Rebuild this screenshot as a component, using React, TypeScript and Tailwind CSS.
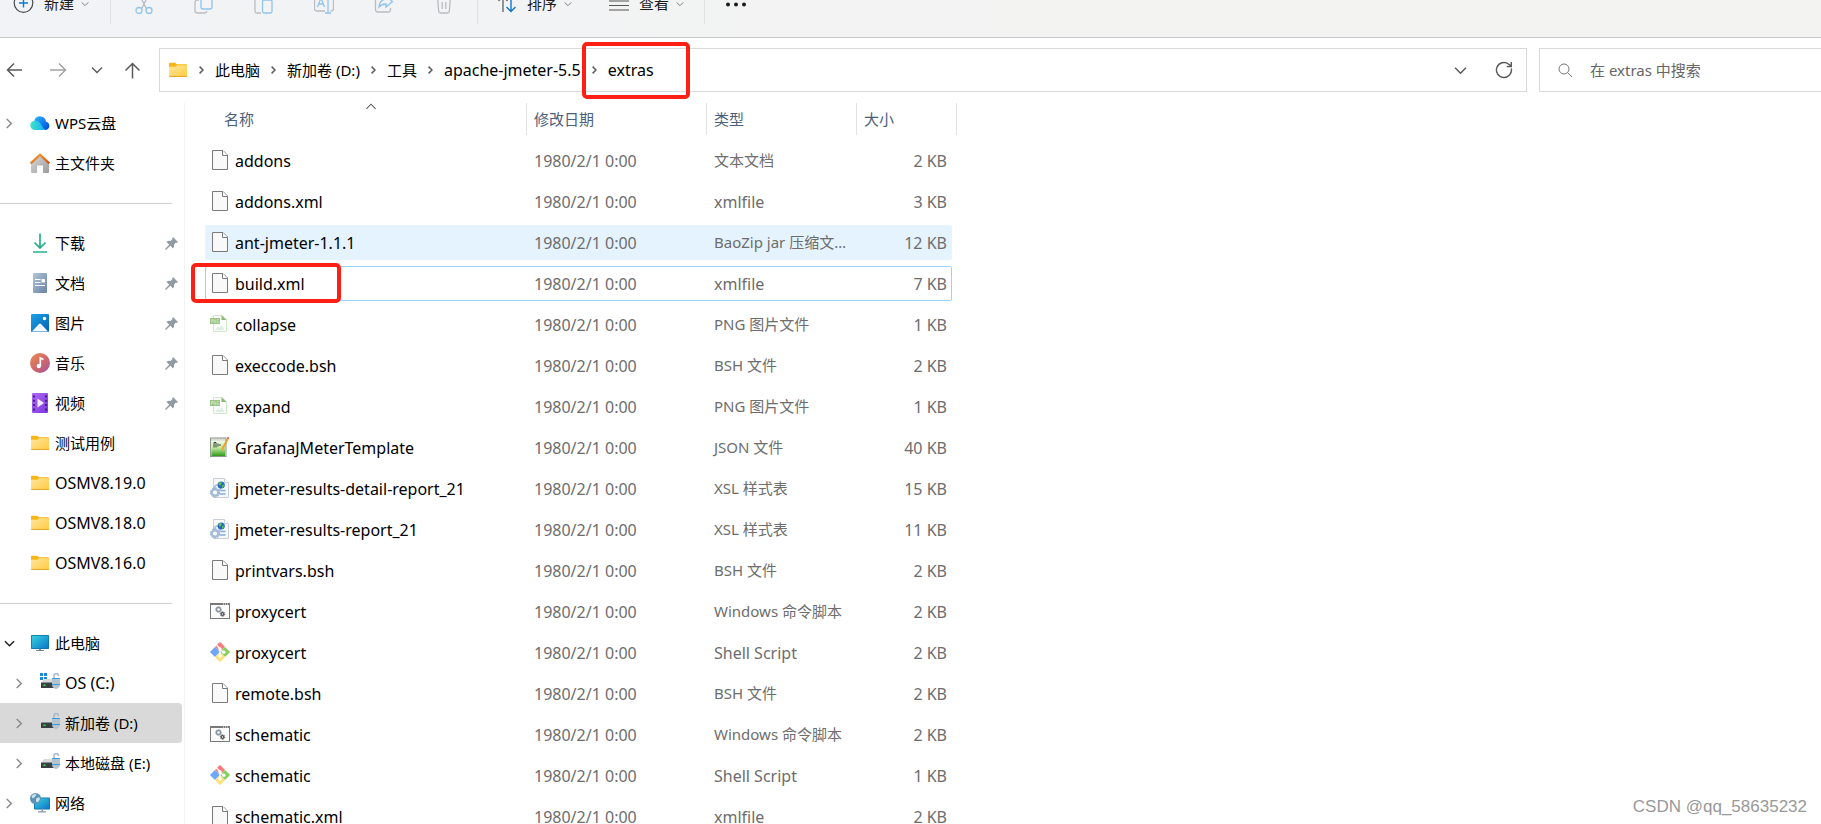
import React from 'react';
import clsx from 'clsx';

type FileKind = 'blank' | 'png' | 'json' | 'xsl' | 'cmd' | 'git';

interface FileRow {
  name: string;
  kind: FileKind;
  type: string;
  size: string;
  state?: 'hover' | 'focused';
}

const MODIFIED = '1980/2/1 0:00';

const FILES: FileRow[] = [
  { name: 'addons', kind: 'blank', type: '文本文档', size: '2 KB' },
  { name: 'addons.xml', kind: 'blank', type: 'xmlfile', size: '3 KB' },
  { name: 'ant-jmeter-1.1.1', kind: 'blank', type: 'BaoZip jar 压缩文件', size: '12 KB', state: 'hover' },
  { name: 'build.xml', kind: 'blank', type: 'xmlfile', size: '7 KB', state: 'focused' },
  { name: 'collapse', kind: 'png', type: 'PNG 图片文件', size: '1 KB' },
  { name: 'execcode.bsh', kind: 'blank', type: 'BSH 文件', size: '2 KB' },
  { name: 'expand', kind: 'png', type: 'PNG 图片文件', size: '1 KB' },
  { name: 'GrafanaJMeterTemplate', kind: 'json', type: 'JSON 文件', size: '40 KB' },
  { name: 'jmeter-results-detail-report_21', kind: 'xsl', type: 'XSL 样式表', size: '15 KB' },
  { name: 'jmeter-results-report_21', kind: 'xsl', type: 'XSL 样式表', size: '11 KB' },
  { name: 'printvars.bsh', kind: 'blank', type: 'BSH 文件', size: '2 KB' },
  { name: 'proxycert', kind: 'cmd', type: 'Windows 命令脚本', size: '2 KB' },
  { name: 'proxycert', kind: 'git', type: 'Shell Script', size: '2 KB' },
  { name: 'remote.bsh', kind: 'blank', type: 'BSH 文件', size: '2 KB' },
  { name: 'schematic', kind: 'cmd', type: 'Windows 命令脚本', size: '2 KB' },
  { name: 'schematic', kind: 'git', type: 'Shell Script', size: '1 KB' },
  { name: 'schematic.xml', kind: 'blank', type: 'xmlfile', size: '2 KB' },
];

// Latin-only labels run one size larger than the Chinese ones
const textSize = (s: string) => (/[\u4e00-\u9fff]/.test(s) ? 'text-[15px]' : 'text-base');

const Chevron: React.FC<{ dir: 'right' | 'down' | 'up'; className?: string; size?: number; width?: number }> = ({ dir, className, size = 12, width = 1.4 }) => {
  const d = { right: 'M3 1l5 5-5 5', down: 'M1 3.5l5 5 5-5', up: 'M1 8.5l5-5 5 5' }[dir];
  return (
    <svg width={size} height={size} viewBox="0 0 12 12" fill="none" stroke="currentColor" strokeWidth={width} className={clsx('shrink-0', className)}>
      <path d={d} />
    </svg>
  );
};

const CrumbArrow = () => (
  <svg width="5" height="8" viewBox="0 0 5 8" fill="none" stroke="#5c5c5c" strokeWidth="1.5" className="shrink-0">
    <path d="M.6.6L4 4 .6 7.4" />
  </svg>
);

const FolderIcon = () => (
  <svg width="20" height="20" viewBox="0 0 20 20" className="shrink-0">
    <defs>
      <linearGradient id="folder" x1="0" y1="0" x2="1" y2="1">
        <stop offset="0" stopColor="#ffe7a0" />
        <stop offset="1" stopColor="#ffca3e" />
      </linearGradient>
    </defs>
    <path d="M1 3.5q0-.8.8-.8h5.4l1.600 1.600H18q1 0 1 1V8H1z" fill="#f8b616" />
    <path d="M1 6.800h6.600l1.400-1.600h9.200q.8 0 .8.8v10.200q0 .8-.8.8H1.800q-.8 0-.8-.8z" fill="url(#folder)" />
    <path d="M1 16h18v.2q0 .8-.8.8H1.800q-.8 0-.8-.8z" fill="#e9a62a" />
  </svg>
);

const CloudIcon = () => (
  <svg width="20" height="20" viewBox="0 0 20 20" className="shrink-0">
    <defs>
      <linearGradient id="cloudA" x1="0" y1="0" x2="1" y2="1">
        <stop offset="0" stopColor="#2bb5ff" />
        <stop offset="1" stopColor="#0047d8" />
      </linearGradient>
      <linearGradient id="cloudB" x1="0" y1="0" x2="1" y2="0">
        <stop offset="0" stopColor="#3fe6c8" />
        <stop offset="1" stopColor="#12a8f5" />
      </linearGradient>
    </defs>
    <path d="M5 17h10.500a4.200 4.200 0 0 0 .5-8.300A6 6 0 0 0 4.500 7z" fill="url(#cloudA)" />
    <path d="M5 17a4.600 4.600 0 0 1-.3-9.200C8 7.200 10 9.500 11.500 12S14 16.500 16 17z" fill="url(#cloudB)" />
  </svg>
);

const HomeIcon = () => (
  <svg width="20" height="20" viewBox="0 0 20 20" className="shrink-0">
    <defs>
      <linearGradient id="homeWall" x1="0" y1="0" x2="1" y2="1">
        <stop offset="0" stopColor="#dcdcdc" />
        <stop offset="1" stopColor="#9b9b9b" />
      </linearGradient>
      <linearGradient id="homeRoof" x1="0" y1="0" x2="1" y2="1">
        <stop offset="0" stopColor="#fba32c" />
        <stop offset="1" stopColor="#d2500e" />
      </linearGradient>
    </defs>
    <path d="M1 9.500L10 1l9 8.500V19q0 1-1 1h-5v-7.500H7V20H2q-1 0-1-1z" fill="url(#homeWall)" />
    <path d="M.7 10.400L10 1.700l9.300 8.700" fill="none" stroke="url(#homeRoof)" strokeWidth="2.200" />
  </svg>
);

const DownloadIcon = () => (
  <svg width="20" height="20" viewBox="0 0 20 20" fill="none" stroke="#25b08c" strokeWidth="1.700" className="shrink-0">
    <path d="M10 .5v14M4.500 9.500L10 15l5.500-5.500M3 19h14" />
  </svg>
);

const DocumentIcon = () => (
  <svg width="20" height="20" viewBox="0 0 20 20" className="shrink-0">
    <defs>
      <linearGradient id="doc" x1="0" y1="0" x2="1" y2="1">
        <stop offset="0" stopColor="#b4c6da" />
        <stop offset="1" stopColor="#6782a3" />
      </linearGradient>
    </defs>
    <rect x="3" width="14" height="20" rx="1" fill="url(#doc)" />
    <path d="M5 6.500h5.500M5 9.500h5.500M5 12.500h10" stroke="#fff" strokeWidth="1.200" />
    <rect x="11.500" y="6" width="3.500" height="3.500" fill="#fff" />
  </svg>
);

const PictureIcon = () => (
  <svg width="20" height="20" viewBox="0 0 20 20" className="shrink-0">
    <defs>
      <linearGradient id="pic" x1="0" y1="0" x2="1" y2="1">
        <stop offset="0" stopColor="#1da3ea" />
        <stop offset="1" stopColor="#0561ae" />
      </linearGradient>
    </defs>
    <rect x="1" y="1" width="18" height="18" rx="1" fill="url(#pic)" />
    <path d="M2 18.500l7-7.500q1-1 2 0l7 7.500z" fill="#f3faff" />
    <circle cx="14.500" cy="5.500" r="1.700" fill="#fff" />
  </svg>
);

const MusicIcon = () => (
  <svg width="20" height="20" viewBox="0 0 20 20" className="shrink-0">
    <defs>
      <linearGradient id="music" x1="0" y1="0" x2="1" y2="1">
        <stop offset="0" stopColor="#ee8a4e" />
        <stop offset=".6" stopColor="#cb6470" />
        <stop offset="1" stopColor="#9c55ae" />
      </linearGradient>
    </defs>
    <circle cx="10" cy="10" r="10" fill="url(#music)" />
    <circle cx="8.800" cy="13" r="2.200" fill="#fff" />
    <path d="M10.300 13V5l3.200 1.500" fill="none" stroke="#fff" strokeWidth="1.600" />
  </svg>
);

const VideoIcon = () => (
  <svg width="20" height="20" viewBox="0 0 20 20" className="shrink-0">
    <defs>
      <linearGradient id="video" x1="0" y1="0" x2="1" y2="1">
        <stop offset="0" stopColor="#b06af0" />
        <stop offset="1" stopColor="#7a38df" />
      </linearGradient>
    </defs>
    <rect x="2" width="16" height="20" rx="1" fill="url(#video)" />
    <path d="M4 2.500v15.500M16 2.500v15.500" stroke="#3d1a80" strokeWidth="1.800" strokeDasharray="2 2.300" />
    <path d="M7.500 5.500l6.500 4.500-6.500 4.500z" fill="#f4eaff" />
  </svg>
);

const MonitorIcon = () => (
  <svg width="20" height="20" viewBox="0 0 20 20" className="shrink-0">
    <defs>
      <linearGradient id="screen" x1="0" y1="0" x2="1" y2="1">
        <stop offset="0" stopColor="#36d3e0" />
        <stop offset="1" stopColor="#0d76c8" />
      </linearGradient>
    </defs>
    <path d="M9 15h2v2h3v1H6v-1h3z" fill="#7b8893" />
    <rect x="1" y="2" width="18" height="14" rx=".8" fill="#1173a8" />
    <rect x="1.800" y="2.800" width="16.400" height="12.400" fill="url(#screen)" />
  </svg>
);

const DriveIcon: React.FC<{ system?: boolean }> = ({ system }) => (
  <svg width="20" height="20" viewBox="0 0 20 20" className="shrink-0">
    {system && <path d="M0 0h3v3H0zM4 0h3v3H4zM0 4h3v3H0zM4 4h3v3H4z" fill="#1989d8" />}
    <path d="M4 6h11l4 4H1z" fill="#d8dadc" />
    <rect x="1" y="9.500" width="16" height="5.500" rx=".6" fill="#3d4043" />
    <rect x="3.500" y="11.500" width="2" height="1.500" fill="#35e15a" />
    <path d="M14 5V3q0-2.500 2.500-2.500Q18.500.5 18.500 3" fill="none" stroke="#a9b8c4" strokeWidth="1.500" />
    <path d="M12 5h8v7q0 2.500-3 4h-2q-3-1.500-3-4z" fill="#b6c4d0" />
    <path d="M12 5.500h8M12 11.500h8" stroke="#3a9be4" strokeWidth="1.200" />
  </svg>
);

const NetworkIcon = () => (
  <svg width="20" height="20" viewBox="0 0 20 20" className="shrink-0">
    <rect x="4" y="4.500" width="16" height="12" rx=".8" fill="#1173a8" />
    <rect x="4.800" y="5.300" width="14.400" height="10.400" fill="url(#screen)" />
    <path d="M11.500 16.500h1.500v1.800h3v1.200H8v-1.200h3.500z" fill="#8b98a2" />
    <circle cx="5.500" cy="5.500" r="5.500" fill="#5c93b5" />
    <path d="M1.500 3q2-2.500 5-2L5 4 2.500 5.500zM6 5.500l3-1.500 1 2-2 3.500-2-1z" fill="#c6e2ee" />
  </svg>
);

const PinIcon = () => (
  <svg width="13" height="13" viewBox="0 0 13 13" className="shrink-0">
    <path d="M7.500.5q.5-.6 1 0l4.200 4.200q.5.500-.2.900-1 .3-1.800.2L9 7.500q.6 2.200-1 4L5.300 8.800 1 13 0 12l4.200-4.300L1.500 5Q3.300 3.400 5.500 4l1.800-1.700Q7.100 1.200 7.500.5z" fill="#8f9ba5" />
  </svg>
);

const Gear: React.FC<{ x: number; y: number; r: number; color: string }> = ({ x, y, r, color }) => (
  <g fill="none" stroke={color}>
    <circle cx={x} cy={y} r={r} strokeWidth="1.300" />
    <circle cx={x} cy={y} r={r + 0.9} strokeWidth="1" strokeDasharray="1.200 1" />
  </g>
);

const FileIcon: React.FC<{ kind: FileKind }> = ({ kind }) => (
  <svg width="20" height="20" viewBox="0 0 20 20" className="mb-0.5 shrink-0">
    {kind === 'blank' && (
      <>
        <path d="M2.500.5H13L17.500 5v14.500h-15z" fill="#f9f9f9" stroke="#7a7a7a" />
        <path d="M12.500.5V5.500h5" fill="#fff" stroke="#7a7a7a" />
      </>
    )}
    {kind === 'png' && (
      <>
        <path d="M3.500 1.500h8.500L16.500 6v11q0 .5-.5.500H4q-.5 0-.5-.5z" fill="#fbfdfa" stroke="#d2e5cd" />
        <path d="M11.500 1L16.500 6h-5z" fill="#8cba78" />
        <path d="M5 16l3-3.500 2 1.500 1.500-3 3 5z" fill="#dcefe2" />
        <rect y="4" width="10" height="6" fill="#9cc487" />
        <path d="M1.500 8.800V5.500h1.500v1.700H1.500M4 8.800V5.500l1.800 3.300V5.500M9 5.500H7.300v3H9V7" fill="none" stroke="#d3e7c8" strokeWidth=".7" />
      </>
    )}
    {kind === 'json' && (
      <>
        <defs>
          <linearGradient id="notepad" x1="0" y1="0" x2="0" y2="1">
            <stop offset="0" stopColor="#f2fbe9" />
            <stop offset=".45" stopColor="#c4ea9d" />
            <stop offset="1" stopColor="#2f9a1c" />
          </linearGradient>
        </defs>
        <rect x=".5" y="1" width="15.500" height="18.500" fill="#dfe5dc" stroke="#8d978a" />
        <rect x="1.500" y="4" width="13.500" height="15" fill="url(#notepad)" />
        <path d="M1 1.500h15" stroke="#b8c0b4" strokeWidth="2" strokeDasharray="1.500 1.500" />
        <path d="M4 10.500v-5h2v5M8 6.500v3M10 7v2" fill="none" stroke="#35413b" />
        <path d="M17 1l1.800 1-5.300 10-2.500 3 .7-4z" fill="#eda12c" />
        <path d="M17 1l.7-1 1.600.8-.5 1.200z" fill="#a6424c" />
      </>
    )}
    {kind === 'xsl' && (
      <>
        <path d="M3.500.5h11L18.500 4.500v15h-15z" fill="#f6f8fb" stroke="#c9cfd6" />
        <path d="M14.500.5v4h4" fill="#fff" stroke="#c9cfd6" />
        <path d="M10.500 12.500h5M9.500 16h6" stroke="#86a9e0" strokeWidth="1.600" />
        <circle cx="7.500" cy="10" r="3" fill="#eef4fb" stroke="#a8bfda" strokeWidth="1.600" />
        <circle cx="5" cy="14.500" r="3.200" fill="#fff" stroke="#a3bbd6" strokeWidth="2.200" />
        <circle cx="5" cy="14.500" r="4.600" fill="none" stroke="#8fa9c8" strokeWidth="1" strokeDasharray="1.800 1.200" />
        <circle cx="11.200" cy="7" r="3.600" fill="#2565c4" />
        <path d="M8.500 5q2-1.500 3.500-.5L11 7 9 7.500zM12 7l2-.500-.5 2.500-1.500 1z" fill="#5ac24d" />
      </>
    )}
    {kind === 'cmd' && (
      <>
        <rect x=".5" y="2.500" width="19" height="15" fill="#fcfcfc" stroke="#787878" />
        <path d="M0 3h20" stroke="#787878" strokeWidth="2" />
        <path d="M13 3h5" stroke="#fff" strokeWidth="1" strokeDasharray="1 1" />
        <Gear x={8.500} y={8.500} r={2} color="#8995a0" />
        <Gear x={12.500} y={13} r={1.400} color="#4d5257" />
      </>
    )}
    {kind === 'git' && (
      <>
        <path d="M9.200.6q.8-.8 1.600 0L15 5l-5 5-5-5z" fill="#f77d7d" />
        <path d="M15 5l4.400 4.200q.8.800 0 1.600L15 15l-5-5z" fill="#86cf5e" />
        <path d="M5 5l5 5-5 5-4.400-4.200q-.8-.8 0-1.600z" fill="#6fa8fa" />
        <path d="M10 10l5 5-4.200 4.400q-.8.800-1.600 0L5 15z" fill="#ffe17c" />
        <path d="M6.500 3L10 6.800V14M10 7.500l3.500 2.800" fill="none" stroke="#fff" strokeWidth="1.400" />
        <circle cx="10" cy="7" r="1.700" fill="#fff" />
        <circle cx="13.800" cy="10.200" r="1.700" fill="#fff" />
        <circle cx="10" cy="14" r="1.700" fill="#fff" />
      </>
    )}
  </svg>
);

interface TreeItem {
  label: string;
  icon: React.ReactNode;
  arrow?: 'right' | 'down';
  nested?: boolean;
  pinned?: boolean;
  active?: boolean;
}

const TREE: TreeItem[][] = [
  [
    { label: 'WPS云盘', icon: <CloudIcon />, arrow: 'right' },
    { label: '主文件夹', icon: <HomeIcon /> },
  ],
  [
    { label: '下载', icon: <DownloadIcon />, pinned: true },
    { label: '文档', icon: <DocumentIcon />, pinned: true },
    { label: '图片', icon: <PictureIcon />, pinned: true },
    { label: '音乐', icon: <MusicIcon />, pinned: true },
    { label: '视频', icon: <VideoIcon />, pinned: true },
    { label: '测试用例', icon: <FolderIcon /> },
    { label: 'OSMV8.19.0', icon: <FolderIcon /> },
    { label: 'OSMV8.18.0', icon: <FolderIcon /> },
    { label: 'OSMV8.16.0', icon: <FolderIcon /> },
  ],
  [
    { label: '此电脑', icon: <MonitorIcon />, arrow: 'down' },
    { label: 'OS (C:)', icon: <DriveIcon system />, arrow: 'right', nested: true },
    { label: '新加卷 (D:)', icon: <DriveIcon />, arrow: 'right', nested: true, active: true },
    { label: '本地磁盘 (E:)', icon: <DriveIcon />, arrow: 'right', nested: true },
    { label: '网络', icon: <NetworkIcon />, arrow: 'right' },
  ],
];

const TreeLink: React.FC<{ item: TreeItem }> = ({ item }) => (
  <a href="#" className={clsx('flex h-10 items-center pr-1', item.nested ? 'pl-[14px]' : 'pl-1', item.active && 'rounded-r-sm bg-[#d9d9d9]')}>
    <span className="flex w-[26px] shrink-0">
      {item.arrow && <Chevron dir={item.arrow} className={item.arrow === 'down' ? 'text-[#222]' : 'text-[#8a8a8a]'} width={1.6} size={11} />}
    </span>
    {item.icon}
    <span className={clsx('ml-[5px] flex-1 whitespace-nowrap', textSize(item.label))}>{item.label}</span>
    {item.pinned && <PinIcon />}
  </a>
);

const TOOLS: { label: string; icon: React.ReactNode }[] = [
  { label: '剪切', icon: <><path d="M5 0l7.500 15M15 0L7.500 15" stroke="#b9bcc0" /><circle cx="5" cy="16.500" r="3" /><circle cx="15" cy="16.500" r="3" /></> },
  { label: '复制', icon: <><path d="M5 6H3.500Q1 6 1 8.500v8Q1 19 3.500 19h7q2 0 2.500-2" stroke="#b9bcc0" /><rect x="7" y="1" width="11" height="14" rx="2" /></> },
  { label: '粘贴', icon: <><path d="M7 19H3q-2 0-2-2V4q0-2 2-2h2M15 2q2 0 2 2" stroke="#b9bcc0" /><rect x="8.500" y="6" width="9.500" height="13" rx="1.500" /></> },
  { label: '重命名', icon: <><path d="M11 17H3q-2.500 0-2.500-2.500v-9Q.5 3 3 3h8M16.500 3q3 0 3 2.500v9q0 2.500-3 2.500" stroke="#b9bcc0" /><path d="M3.500 13L7 4l3.500 9M5 10h4M14 1v18M11 19h6" /></> },
  { label: '共享', icon: <><path d="M8 2H4Q1.500 2 1.500 4.500v11Q1.500 18 4 18h10q2.500 0 2.500-2.500V14" stroke="#b9bcc0" /><path d="M12 2l6.500 5.500L12 13v-3q-4.500 0-7 3 .5-7 7-8z" /></> },
  { label: '删除', icon: <path d="M1.500 3h17M3.500 3l1.200 14q.2 2 2 2h6.600q1.800 0 2-2L16.500 3M8.200 8v7M11.800 8v7" stroke="#b9bcc0" /> },
];

const ToolSeparator = () => <span className="h-10 w-px shrink-0 bg-[#e0e1e4]" />;

const Toolbar = () => (
  <header className="flex h-[38px] flex-col justify-end overflow-hidden border-b border-[#c6c7ca] bg-linear-to-r from-[#f2f3f6] via-[#f3f3f3] via-50% to-[#f3f3f1]">
    <div className="flex h-[67px] shrink-0 items-center text-[15px] text-[#1b1b1b]">
      <button className="flex items-center pl-[13px]">
        <svg width="21" height="21" viewBox="0 0 21 21" fill="none" strokeWidth="1.200">
          <circle cx="10.500" cy="10" r="9.300" stroke="#4a4a4a" />
          <path d="M10.500 5.500v9M6 10h9" stroke="#0f78d0" strokeWidth="1.400" />
        </svg>
        <span className="ml-[10px]">新建</span>
        <Chevron dir="down" size={8} className="ml-[7px] text-[#777]" />
      </button>
      <span className="w-[21px]" />
      <ToolSeparator />
      <div className="mx-[3px] flex">
        {TOOLS.map(tool => (
          <button key={tool.label} aria-label={tool.label} className="flex w-[60px] justify-center">
            <svg width="20" height="20" viewBox="0 0 20 20" fill="none" stroke="#8fc4ec" strokeWidth="1.300">{tool.icon}</svg>
          </button>
        ))}
      </div>
      <ToolSeparator />
      <button className="flex items-center pl-[19px]">
        <svg width="20" height="20" viewBox="0 0 20 20" fill="none" strokeWidth="1.400">
          <path d="M6 18V3M1.500 7L6 2.500 10.500 7" stroke="#6b6b6b" />
          <path d="M14 2v15.500M9.500 13l4.500 4.500 4.500-4.500" stroke="#0f78d0" />
        </svg>
        <span className="ml-[10px]">排序</span>
        <Chevron dir="down" size={8} className="ml-[7px] text-[#777]" />
      </button>
      <button className="flex items-center pl-[37px]">
        <svg width="20" height="20" viewBox="0 0 20 20" fill="none" stroke="#555" strokeWidth="1.100">
          <path d="M0 7h20M0 11.500h20M0 16h20" />
        </svg>
        <span className="ml-[10px]">查看</span>
        <Chevron dir="down" size={8} className="ml-[7px] text-[#777]" />
      </button>
      <span className="w-[20px]" />
      <ToolSeparator />
      <button aria-label="更多" className="pl-5">
        <svg width="22" height="20" viewBox="0 0 22 20" fill="#1b1b1b">
          <circle cx="3" cy="10.500" r="2" />
          <circle cx="11" cy="10.500" r="2" />
          <circle cx="19" cy="10.500" r="2" />
        </svg>
      </button>
    </div>
  </header>
);

const CRUMBS = ['此电脑', '新加卷 (D:)', '工具', 'apache-jmeter-5.5'];

const NavBar = () => (
  <nav className="flex items-center pt-[10px] pb-[5px]">
    <div className="flex w-[159px] shrink-0 items-center pl-[6px] text-[#5a5a5a]">
      <button aria-label="后退">
        <svg width="17" height="16" viewBox="0 0 17 16" fill="none" stroke="currentColor" strokeWidth="1.500"><path d="M16 8H1.500M8 1.500L1.500 8 8 14.500" /></svg>
      </button>
      <button aria-label="前进" className="ml-[27px] text-[#a3a3a3]">
        <svg width="17" height="16" viewBox="0 0 17 16" fill="none" stroke="currentColor" strokeWidth="1.500"><path d="M0 8h15M9 1.500L15.500 8 9 14.500" /></svg>
      </button>
      <button aria-label="最近位置" className="ml-6"><Chevron dir="down" /></button>
      <button aria-label="上移" className="ml-[21px]">
        <svg width="17" height="17" viewBox="0 0 17 17" fill="none" stroke="currentColor" strokeWidth="1.500"><path d="M8.500 16.500v-15M1.500 8.500l7-7 7 7" /></svg>
      </button>
    </div>
    <div className="flex h-11 flex-1 items-center gap-[11px] border border-[#d9d9d9] pr-[13px] pl-2">
      <FolderIcon />
      {CRUMBS.map(crumb => (
        <React.Fragment key={crumb}>
          <CrumbArrow />
          <a href="#" className={clsx('whitespace-nowrap', textSize(crumb))}>{crumb}</a>
        </React.Fragment>
      ))}
      <div className="relative flex items-center gap-[11px]">
        <CrumbArrow />
        <a href="#" className="text-base">extras</a>
        <span className="pointer-events-none absolute -top-4 -left-2.5 h-[57px] w-[108px] rounded-[5px] border-4 border-[#ff2015]" />
      </div>
      <button aria-label="展开地址栏" className="ml-auto text-[#5a5a5a]"><Chevron dir="down" size={13} /></button>
      <button aria-label="刷新" className="ml-[17px]">
        <svg width="18" height="18" viewBox="0 0 18 18" fill="none" stroke="#5a5a5a" strokeWidth="1.400">
          <path d="M16.300 7.500A7.500 7.500 0 1 1 13.500 3L16 5M16.300 1v4.500h-4.500" />
        </svg>
      </button>
    </div>
    <div className="ml-3 flex h-11 w-[282px] shrink-0 items-center border border-r-0 border-[#d9d9d9] pl-[18px]">
      <label htmlFor="search" aria-label="搜索">
        <svg width="15" height="15" viewBox="0 0 15 15" fill="none" stroke="#777"><circle cx="6" cy="6" r="5" /><path d="M9.500 9.500l4.500 4.500" /></svg>
      </label>
      <input id="search" placeholder="在 extras 中搜索" className="ml-[17px] w-full min-w-0 text-[15px] outline-none placeholder:text-[#666]" />
    </div>
  </nav>
);

const HeaderCell: React.FC<{ label: string; sorted?: boolean }> = ({ label, sorted }) => (
  <th className="h-[34px] p-0 text-left align-top font-normal">
    <div className="flex h-8 border-r border-[#e3e3e3]">
      <button className={clsx('relative flex-1 pt-px text-left', sorted ? 'ml-[11px] pl-2' : 'pl-[7px]')}>
        {label}
        {sorted && <Chevron dir="up" size={11} width={1.1} className="absolute top-[-2px] left-1/2 -translate-x-1/2 text-[#555]" />}
      </button>
    </div>
  </th>
);

const FileTable = () => (
  <table className="w-[752px] table-fixed border-separate border-spacing-x-0 border-spacing-y-[6px] text-[#6d6d6d]">
    <colgroup>
      <col className="w-[322px]" />
      <col className="w-[180px]" />
      <col className="w-[150px]" />
      <col className="w-[95px]" />
      <col className="w-[5px]" />
    </colgroup>
    <thead className="text-[15px] text-[#4c607a]">
      <tr>
        <HeaderCell label="名称" sorted />
        <HeaderCell label="修改日期" />
        <HeaderCell label="类型" />
        <th className="h-[34px] p-0 text-left align-top font-normal">
          <button className="h-8 pt-px pl-[7px]">大小</button>
        </th>
        <td className="p-0 align-top"><div className="h-8 border-r border-[#e3e3e3]" /></td>
      </tr>
    </thead>
    <tbody>
      {FILES.map(file => (
        <tr
          key={file.name + file.kind}
          className={clsx(
            'h-[35px] [&>td]:border-y [&>td]:border-transparent [&>td:first-child]:border-l [&>td:last-child]:border-r',
            file.state === 'hover' && '[&>td]:border-[#e5f3ff]! [&>td]:bg-[#e5f3ff]',
            file.state === 'focused' && '[&>td]:border-[#99d1ff]!',
          )}
        >
          <td className="relative rounded-l-xs p-0 pl-1">
            <div className="flex items-center gap-[5px]">
              <FileIcon kind={file.kind} />
              <span className="text-base text-black">{file.name}</span>
            </div>
            {file.state === 'focused' && (
              <span className="pointer-events-none absolute -top-1 -left-[15px] h-10 w-[150px] rounded-[5px] border-4 border-[#ff2015]" />
            )}
          </td>
          <td className="p-0 pl-[7px] text-base">{MODIFIED}</td>
          <td className={clsx('truncate p-0 pr-2 pl-[7px]', textSize(file.type))}>{file.type}</td>
          <td className="rounded-r-xs p-0 pr-1 text-right text-base">{file.size}</td>
        </tr>
      ))}
    </tbody>
  </table>
);

export default function App() {
  return (
    <div className="relative flex h-screen flex-col overflow-hidden bg-white font-['Noto_Sans','Noto_Sans_CJK_SC',sans-serif] text-black">
      <Toolbar />
      <NavBar />
      <div className="flex min-h-0 flex-1">
        <aside className="mt-[6px] w-[185px] shrink-0 border-r border-[#f3f3f3] pr-[2px]">
          {TREE.map((group, i) => (
            <React.Fragment key={i}>
              {i > 0 && (
                <div className="flex h-10 items-center pr-[10px]">
                  <hr className="w-full border-[#d0d0d0]" />
                </div>
              )}
              {group.map(item => <TreeLink key={item.label} item={item} />)}
            </React.Fragment>
          ))}
        </aside>
        <main className="min-w-0 flex-1 pl-5">
          <FileTable />
        </main>
      </div>
      <span className="absolute right-3.5 bottom-[5px] font-['Liberation_Sans',sans-serif] text-[17px] text-[#999]">CSDN @qq_58635232</span>
    </div>
  );
}
